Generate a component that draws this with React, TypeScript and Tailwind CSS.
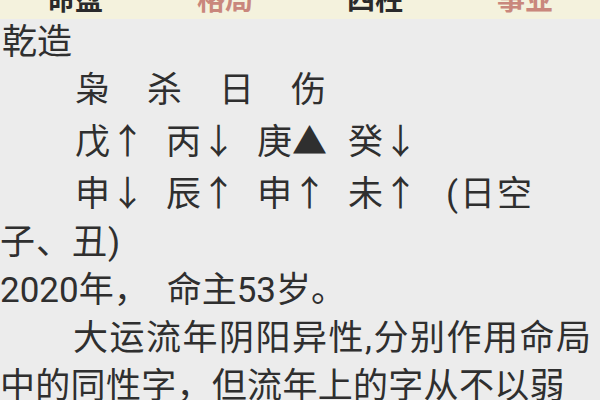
const tabs = [
  { label: "命盘", color: "text-[#2a2a2a]" },
  { label: "格局", color: "text-[#c9877c]" },
  { label: "四柱", color: "text-[#2a2a2a]" },
  { label: "事业", color: "text-[#c9877c]" },
];

const cjk = { fontFamily: 'Roboto, "Noto Sans CJK SC", sans-serif' };
const han = { fontFamily: '"Noto Sans CJK SC", sans-serif' };

const Pair = ({ ch, mark }: { ch: string; mark: string }) => (
  <span className="inline-block w-[91px]">
    {ch}
    <span style={han}>{mark}</span>
  </span>
);

const App = () => {
  return (
    <div className="w-[600px] h-[400px] overflow-hidden bg-[#ececec] text-[#2f2f2f]" style={cjk}>
      {/* tab bar, scrolled so only the lower half of the labels shows */}
      <div className="h-[19px] overflow-hidden bg-[#f4f2dd]">
        <div className="grid grid-cols-4 -mt-[16px]">
          {tabs.map((t) => (
            <div key={t.label} className={`text-center text-[28px] leading-[28px] font-bold ${t.color}`} style={han}>
              {t.label}
            </div>
          ))}
        </div>
      </div>
      <div className="pl-[2px] text-[35px] leading-[48px] whitespace-nowrap">
        <div>乾造</div>
        <div className="pl-[73px]">
          {["枭", "杀", "日", "伤"].map((c) => (
            <span key={c} className="inline-block w-[72px]">{c}</span>
          ))}
        </div>
        <div className="pl-[73px]">
          <Pair ch="戊" mark="↑" />
          <Pair ch="丙" mark="↓" />
          <Pair ch="庚" mark="▲" />
          <Pair ch="癸" mark="↓" />
        </div>
        <div className="pl-[73px]">
          <Pair ch="申" mark="↓" />
          <Pair ch="辰" mark="↑" />
          <Pair ch="申" mark="↑" />
          <Pair ch="未" mark="↑" />
          <span className="ml-[7px] tracking-[2px]">(日空</span>
        </div>
        <div className="-ml-[2px] tracking-[1px]">子、丑)</div>
        <div className="-ml-[2px]">
          2020年，<span className="ml-[18px]">命主53岁。</span>
        </div>
        <div className="pl-[71px] tracking-[1.5px]">大运流年阴阳异性,分别作用命局</div>
        <div className="-ml-[2px] tracking-[0.3px]">中的同性字，但流年上的字从不以弱</div>
      </div>
    </div>
  );
};

export default App;
